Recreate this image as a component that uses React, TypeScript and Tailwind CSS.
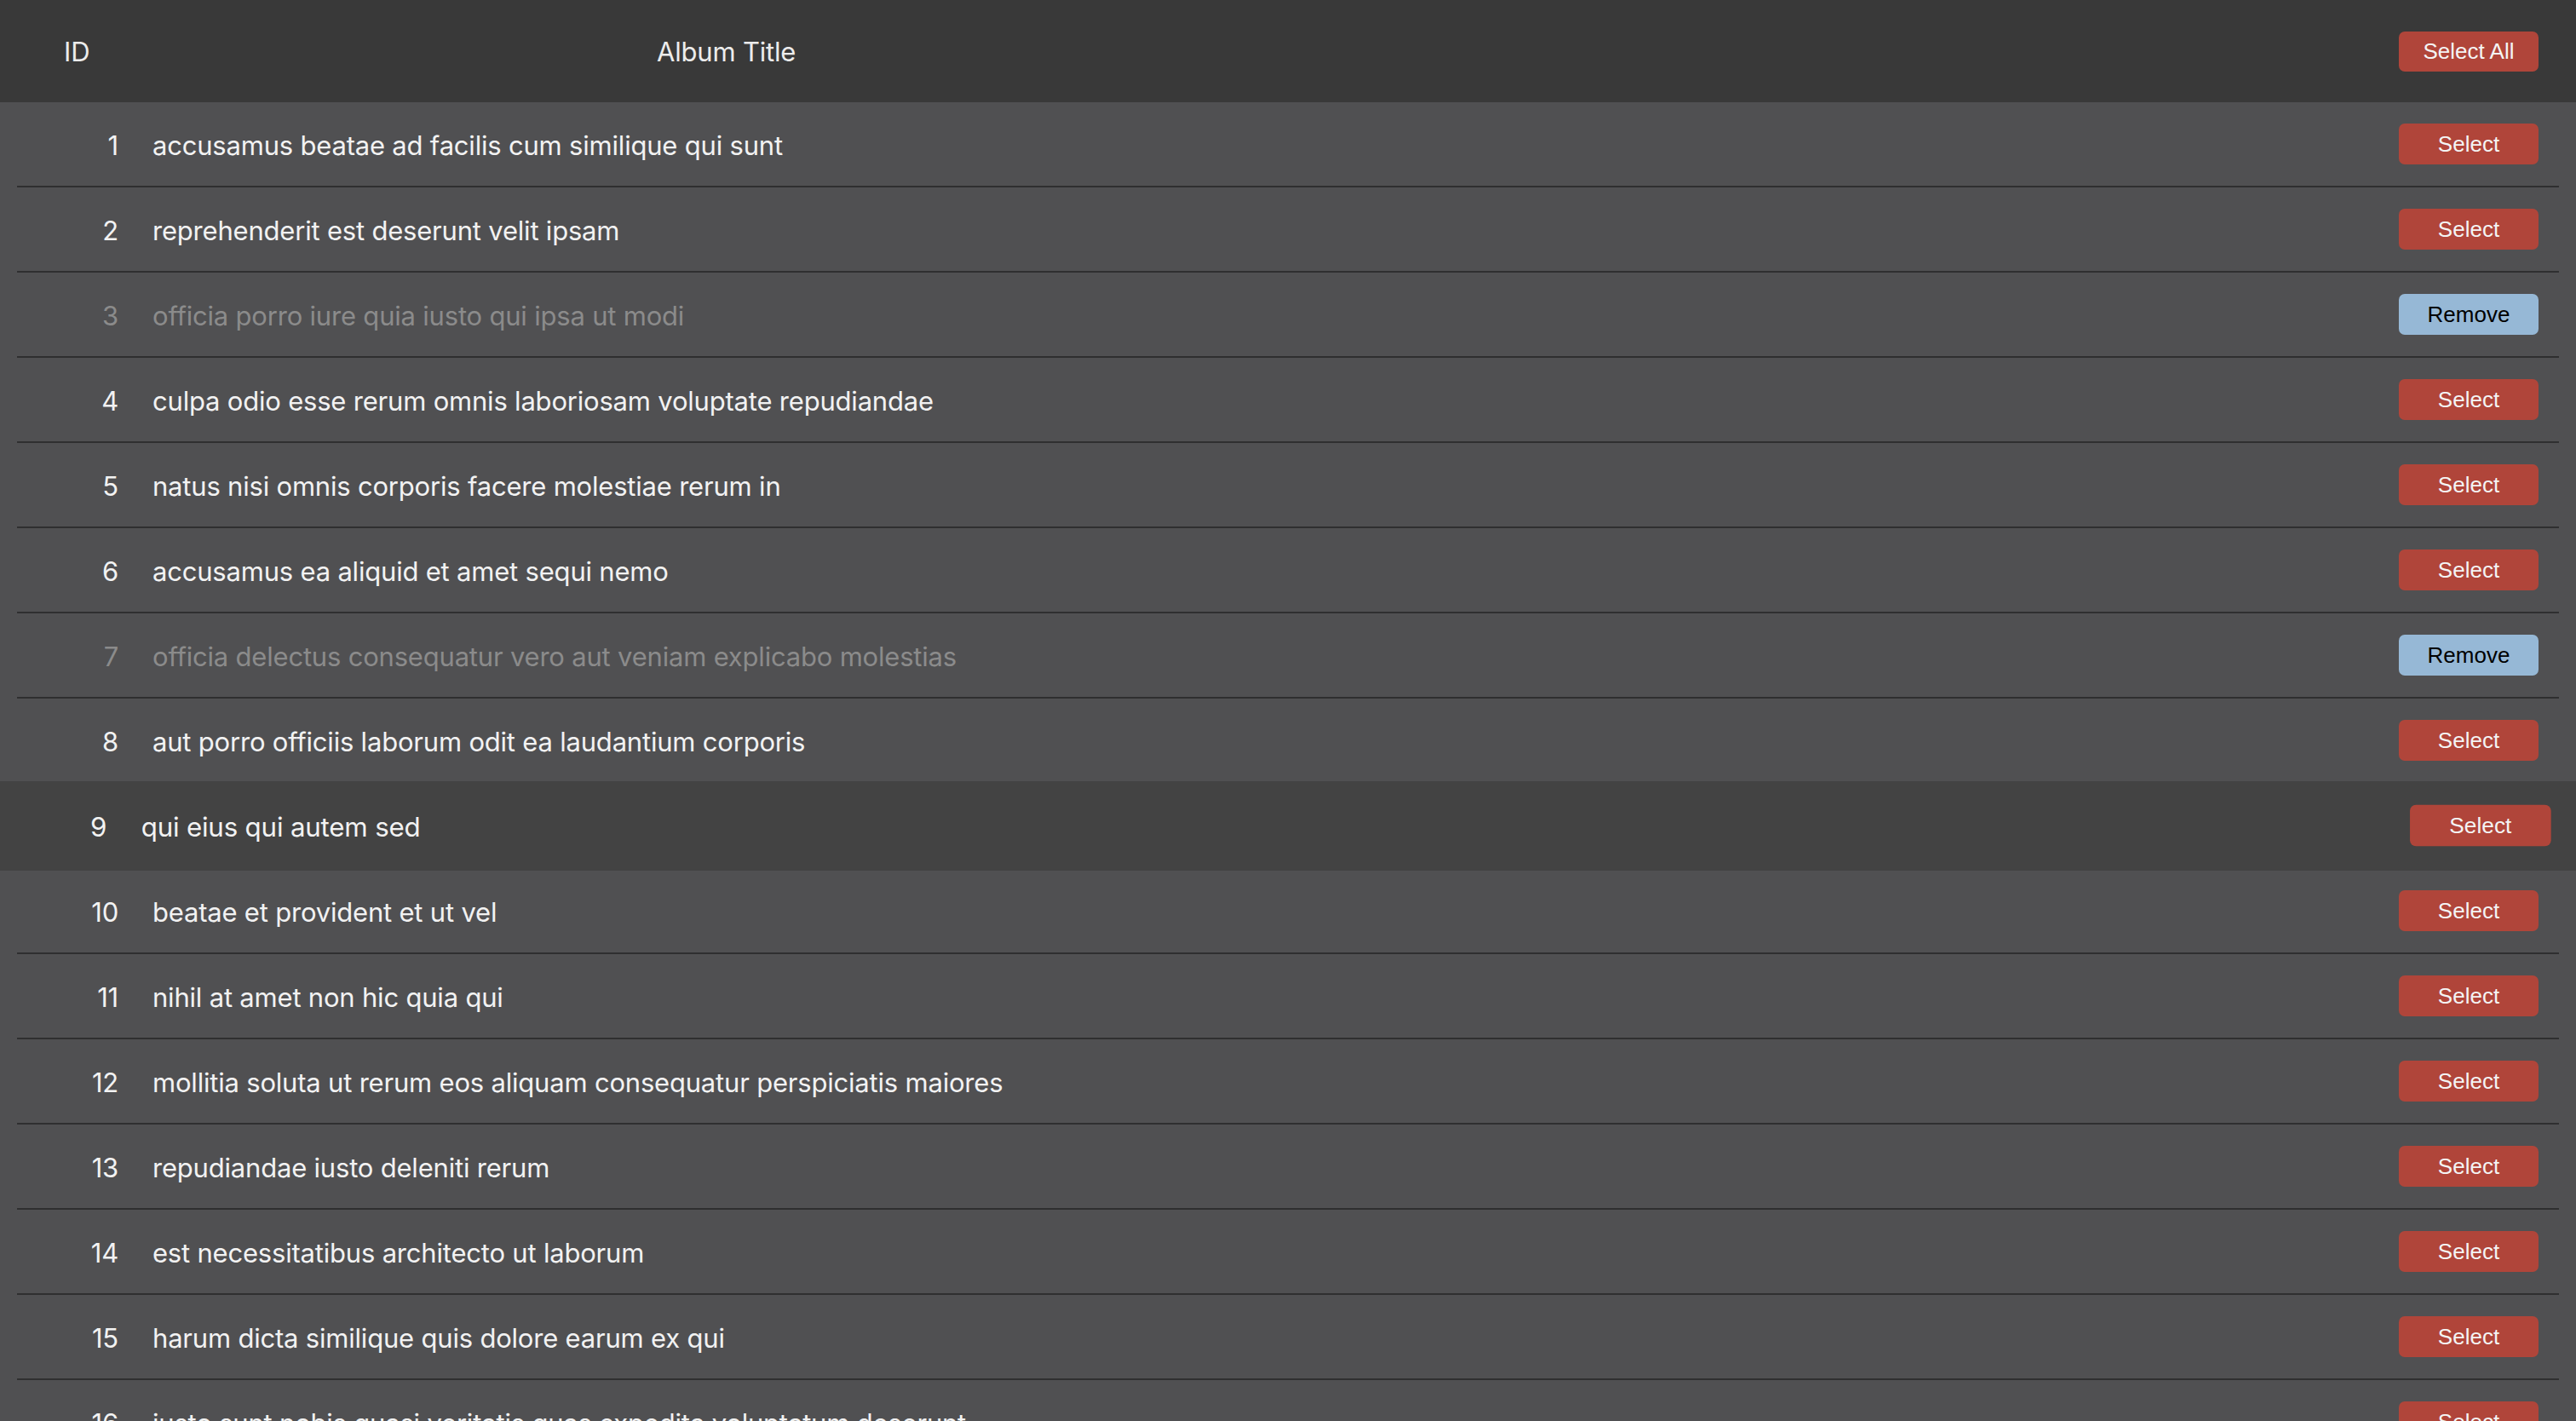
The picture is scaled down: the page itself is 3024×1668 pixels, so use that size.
import React from "react";

const albums: { id: number; title: string; selected?: boolean }[] = [
  { id: 1, title: "accusamus beatae ad facilis cum similique qui sunt" },
  { id: 2, title: "reprehenderit est deserunt velit ipsam" },
  { id: 3, title: "officia porro iure quia iusto qui ipsa ut modi", selected: true },
  { id: 4, title: "culpa odio esse rerum omnis laboriosam voluptate repudiandae" },
  { id: 5, title: "natus nisi omnis corporis facere molestiae rerum in" },
  { id: 6, title: "accusamus ea aliquid et amet sequi nemo" },
  { id: 7, title: "officia delectus consequatur vero aut veniam explicabo molestias", selected: true },
  { id: 8, title: "aut porro officiis laborum odit ea laudantium corporis" },
  { id: 9, title: "qui eius qui autem sed" },
  { id: 10, title: "beatae et provident et ut vel" },
  { id: 11, title: "nihil at amet non hic quia qui" },
  { id: 12, title: "mollitia soluta ut rerum eos aliquam consequatur perspiciatis maiores" },
  { id: 13, title: "repudiandae iusto deleniti rerum" },
  { id: 14, title: "est necessitatibus architecto ut laborum" },
  { id: 15, title: "harum dicta similique quis dolore earum ex qui" },
  { id: 16, title: "iusto sunt nobis quasi veritatis quas expedita voluptatum deserunt" },
  { id: 17, title: "natus doloribus necessitatibus ipsa" },
  { id: 18, title: "quibusdam voluptatibus sint tempore" },
];

const textFont = { fontFamily: "Inter, 'Noto Sans', sans-serif" };

function RowButton({ selected }: { selected?: boolean }) {
  return (
    <button
      className={
        "w-[164px] h-[48px] rounded-[7px] text-[26px] " +
        (selected ? "bg-[#96b8d6] text-black" : "bg-[#b0453a] text-[#f4f4f4]")
      }
      style={{ fontFamily: "'Liberation Sans', Arial, sans-serif" }}
    >
      {selected ? "Remove" : "Select"}
    </button>
  );
}

function RowContent({ a }: { a: (typeof albums)[number] }) {
  return (
    <>
      <div
        className={
          "w-[119px] pt-[4px] text-right text-[31px] tracking-[-0.2px] " +
          (a.selected ? "text-[#8b8b8b]" : "text-[#f2f2f2]")
        }
        style={textFont}
      >
        {a.id}
      </div>
      <div
        className={
          "ml-[40px] pt-[4px] flex-1 text-[31px] tracking-[-0.2px] whitespace-nowrap " +
          (a.selected ? "text-[#8b8b8b]" : "text-[#f2f2f2]")
        }
        style={textFont}
      >
        {a.title}
      </div>
      <div className="mr-[24px]">
        <RowButton selected={a.selected} />
      </div>
    </>
  );
}

export default function App() {
  return (
    <div className="h-screen overflow-hidden bg-[#505052]">
      <div className="h-[120px] bg-[#393939] flex items-center">
        <div
          className="w-[771px] pl-[75px] pt-[2px] text-[31px] text-[#ececec] tracking-[-0.2px]"
          style={textFont}
        >
          ID
        </div>
        <div
          className="flex-1 pt-[2px] text-[31px] text-[#ececec] tracking-[-0.2px]"
          style={textFont}
        >
          Album Title
        </div>
        <button
          className="mr-[44px] w-[164px] h-[47px] rounded-[7px] bg-[#b0453a] text-[#f4f4f4] text-[26px]"
          style={{ fontFamily: "'Liberation Sans', Arial, sans-serif" }}
        >
          Select All
        </button>
      </div>
      <div className="flex flex-col">
        {albums.map((a) =>
          a.id === 9 ? (
            <div
              key={a.id}
              className="relative z-10 -mt-[3px] -mb-[2px] h-[105px] bg-[#434343] flex items-center"
            >
              <div className="mx-[20px] flex-1 flex items-center scale-[1.01]">
                <RowContent a={a} />
              </div>
            </div>
          ) : (
            <div
              key={a.id}
              className="mx-[20px] h-[100px] border-b-2 border-[#2f2f30] flex items-center"
            >
              <RowContent a={a} />
            </div>
          )
        )}
      </div>
    </div>
  );
}
